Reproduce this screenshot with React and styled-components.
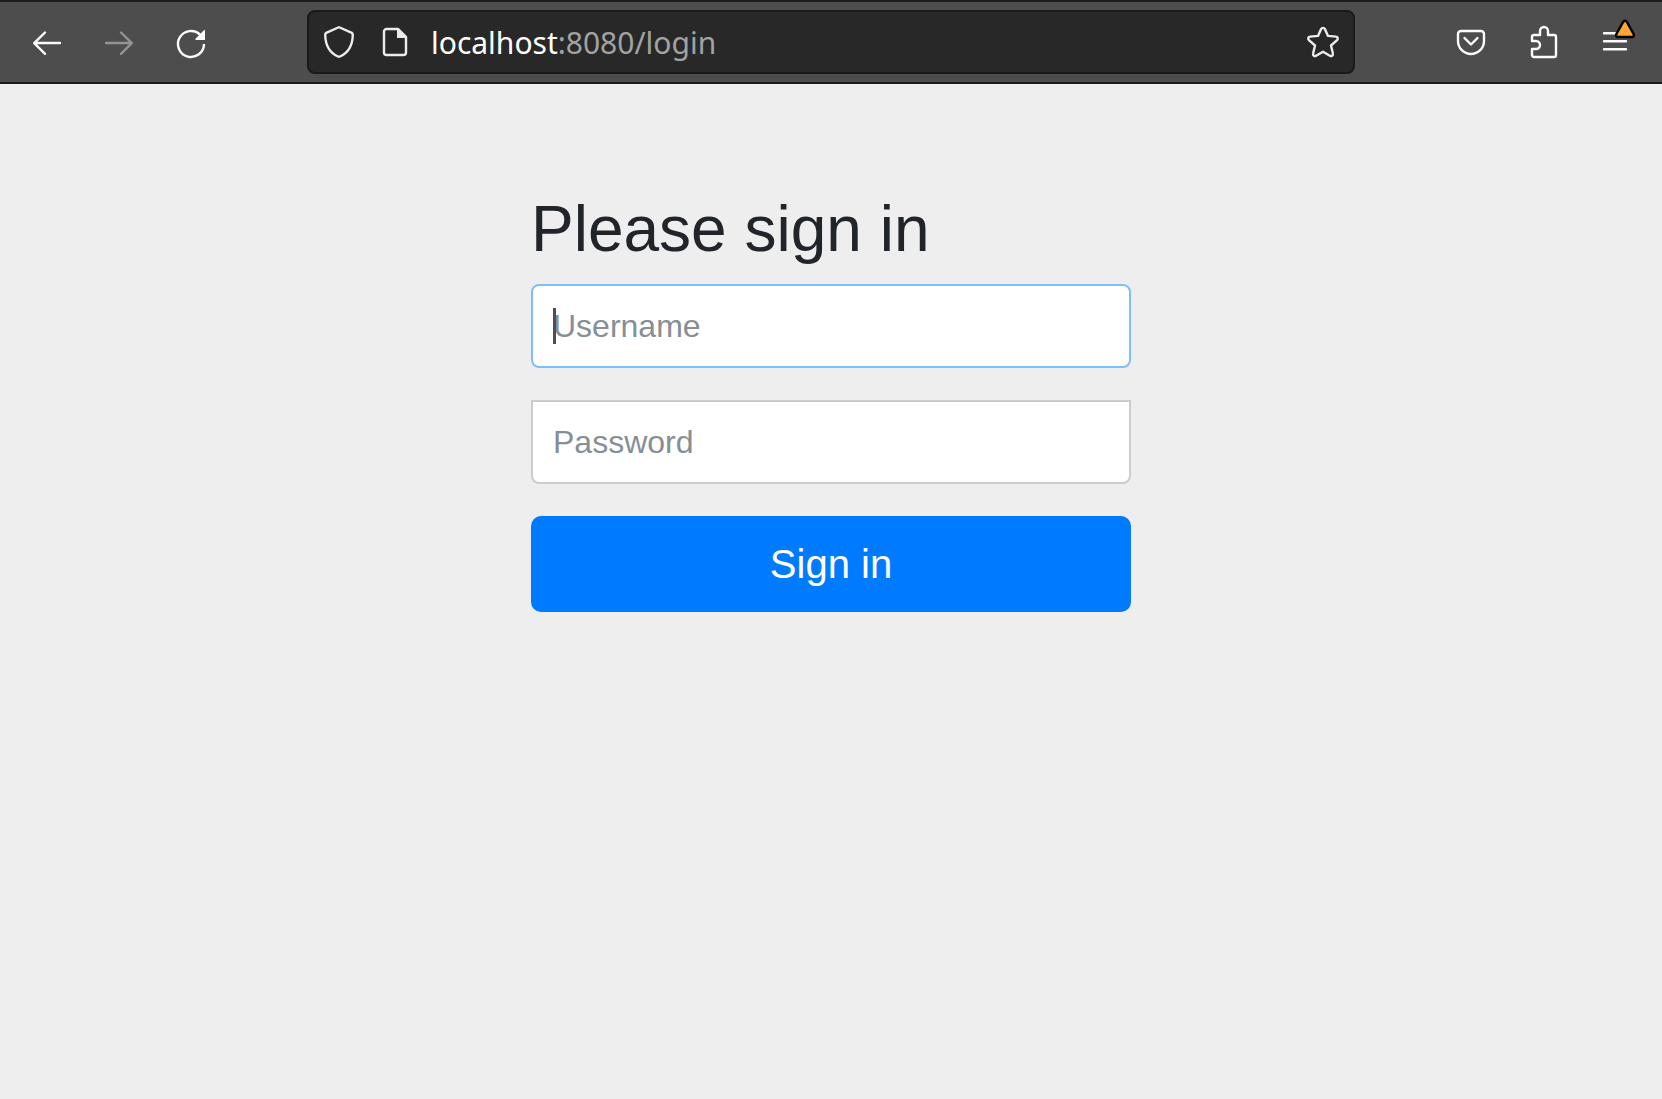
import React from "react";
import styled, { createGlobalStyle } from "styled-components";

const GlobalStyle = createGlobalStyle`
  *, *::before, *::after { box-sizing: border-box; }
  body {
    margin: 0;
    background: #eeeeee;
    color: #212529;
    font-family: "Liberation Sans", Arial, sans-serif;
  }
  button, input { font: inherit; }
`;

const Toolbar = styled.header`
  display: flex;
  align-items: center;
  gap: 84px;
  height: 84px;
  padding: 0 15px;
  background: #4d4d4d;
  border-top: 2px solid #1c1c1c;
  border-bottom: 2px solid #1a1a1a;
`;

const ToolGroup = styled.nav`
  display: flex;
  gap: 8px;
`;

const ToolButton = styled.button`
  display: flex;
  align-items: center;
  justify-content: center;
  width: 64px;
  height: 64px;
  padding: 0;
  border: 0;
  background: none;
  color: #fbfbfe;
  opacity: ${(p) => (p.disabled ? 0.4 : 1)};
`;

const UrlBar = styled.div`
  flex: 1;
  min-width: 0;
  display: flex;
  align-items: center;
  gap: 20px;
  height: 64px;
  padding: 0 14px;
  background: #282828;
  border: 2px solid #1a1a1a;
  border-radius: 8px;
  color: #ececec;
`;

const UrlIcons = styled.div`
  display: flex;
  gap: 24px;
`;

const UrlButton = styled.button`
  display: flex;
  padding: 0;
  border: 0;
  background: none;
  color: inherit;
`;

const Address = styled.div`
  flex: 1;
  min-width: 0;
  padding-top: 2px;
  overflow: hidden;
  white-space: nowrap;
  outline: 0;
  color: #a2a2a2;
  font-family: "Noto Sans", "Open Sans", sans-serif;
  font-size: 30px;
  line-height: 44px;
`;

const Host = styled.span`
  color: #ffffff;
`;

const Glyph = styled.svg`
  display: block;
  width: 32px;
  height: 32px;
  overflow: visible;
  fill: none;
  stroke: currentColor;
  stroke-width: 2.4;
  stroke-linecap: round;
  stroke-linejoin: round;
`;

const Page = styled.main`
  padding: 108px 30px 30px;
`;

const Form = styled.form`
  max-width: 600px;
  margin: 0 auto;
`;

const Title = styled.h2`
  margin: 0 0 18px;
  font-size: 64px;
  font-weight: 400;
  line-height: 74px;
`;

const Field = styled.label`
  display: block;
  position: relative;
  margin-bottom: 32px;
`;

const Caret = styled.span`
  position: absolute;
  top: 24px;
  left: 22px;
  width: 3px;
  height: 36px;
  background: #495057;
  pointer-events: none;
`;

const TextInput = styled.input`
  display: block;
  width: 100%;
  height: 84px;
  padding: 0 20px;
  background: #ffffff;
  border: 2px solid ${(p) => (p.$active ? "#80bdff" : "#cccccc")};
  border-radius: ${(p) => (p.$squareTop ? "0 0 8px 8px" : "8px")};
  color: #495057;
  font-size: 32px;
  outline: 0;

  &::placeholder { color: #868e96; opacity: 1; }
  &:focus { border-color: #80bdff; }
  &:focus + ${Caret}, &:not(:placeholder-shown) + ${Caret} { display: none; }
`;

const SubmitButton = styled.button`
  display: block;
  width: 100%;
  padding: 16px 32px;
  background: #007bff;
  border: 2px solid #007bff;
  border-radius: 10px;
  color: #ffffff;
  font-size: 40px;
  line-height: 60px;
`;

const Icon = ({ children }) => (
  <Glyph viewBox="0 0 32 32" aria-hidden="true">{children}</Glyph>
);

const BackIcon = () => (
  <Icon><path d="M29 17H3.4M14 6.5L3.2 17.2L14 27.8" /></Icon>
);

const ForwardIcon = () => (
  <Icon><path d="M3 17H28.6M18 6.5L28.8 17.2L18 27.8" /></Icon>
);

const ReloadIcon = () => (
  <Icon>
    <path strokeLinecap="butt" d="M29 18A13 13 0 1 1 25.2 8.8" />
    <path fill="currentColor" stroke="none" d="M30 4.4V14H21a.7.7 0 0 1-.5-1.2L28.9 4.3q1-.8 1.1.1Z" />
  </Icon>
);

const ShieldIcon = () => (
  <Icon>
    <path d="M15.2 1.5L3.2 6.9Q2.2 7.5 2.2 9C2.5 19 7 27 15 30.5Q16 31 17 30.5C25 27 29.5 19 29.8 9Q29.8 7.5 28.8 6.9L16.8 1.5Q16 1.1 15.2 1.5Z" />
  </Icon>
);

const PageIcon = () => (
  <Icon>
    <path d="M7.5 3H19L27 11V26.5a2.5 2.5 0 0 1-2.5 2.5H7.5A2.5 2.5 0 0 1 5 26.5V5.5A2.5 2.5 0 0 1 7.5 3Z" />
    <path fill="currentColor" stroke="none" d="M18 2.5V12H28V10.5L19.5 2Z" />
  </Icon>
);

const StarIcon = () => (
  <Icon>
    <path d="M14.1 3.1a2.1 2.1 0 0 1 3.8 0L21 9.9L28.9 10.6a2 2 0 0 1 1.2 3.5L24 19.5L25.9 27.6a2 2 0 0 1-3 2.2L16 25.7L9.1 29.8a2 2 0 0 1-3-2.2L8 19.5L1.9 14.1a2 2 0 0 1 1.2-3.5L11 9.9Z" />
  </Icon>
);

const PocketIcon = () => (
  <Icon>
    <path d="M6 5H26a3 3 0 0 1 3 3v7a13 13 0 0 1-26 0V8a3 3 0 0 1 3-3Z" />
    <path d="M9.5 12L16 18.5L22.5 12" />
  </Icon>
);

const ExtensionIcon = () => (
  <Icon>
    <path d="M13 9V5a4 4 0 0 1 8 0v4h6a2 2 0 0 1 2 2v18a2 2 0 0 1-2 2H7a2 2 0 0 1-2-2v-6h4a4 4 0 0 0 0-8H5v-4a2 2 0 0 1 2-2Z" />
  </Icon>
);

const MenuIcon = () => (
  <Icon>
    <path d="M5 7.3H27M5 15.3H27M5 23.3H27" />
    <path fill="#ffa436" stroke="#000000" d="M24.3-4.3Q26-6.200 27.7-4.3L34.700 8.200Q35.4 11 33 11H19Q16.6 11 17.3 8.200Z" />
  </Icon>
);

export default function App() {
  return (
    <>
      <GlobalStyle />
      <Toolbar>
        <ToolGroup aria-label="Navigation">
          <ToolButton type="button" aria-label="Back"><BackIcon /></ToolButton>
          <ToolButton type="button" aria-label="Forward" disabled><ForwardIcon /></ToolButton>
          <ToolButton type="button" aria-label="Reload"><ReloadIcon /></ToolButton>
        </ToolGroup>
        <UrlBar>
          <UrlIcons>
            <UrlButton type="button" aria-label="Tracking protection"><ShieldIcon /></UrlButton>
            <UrlButton type="button" aria-label="Site information"><PageIcon /></UrlButton>
          </UrlIcons>
          <Address role="textbox" aria-label="Address" tabIndex={0} contentEditable suppressContentEditableWarning spellCheck={false}>
            <Host>localhost</Host>:8080/login
          </Address>
          <UrlButton type="button" aria-label="Bookmark this page"><StarIcon /></UrlButton>
        </UrlBar>
        <ToolGroup aria-label="Tools">
          <ToolButton type="button" aria-label="Save to Pocket"><PocketIcon /></ToolButton>
          <ToolButton type="button" aria-label="Extensions"><ExtensionIcon /></ToolButton>
          <ToolButton type="button" aria-label="Application menu"><MenuIcon /></ToolButton>
        </ToolGroup>
      </Toolbar>
      <Page>
        <Form onSubmit={(event) => event.preventDefault()}>
          <Title>Please sign in</Title>
          <Field htmlFor="username">
            <TextInput id="username" name="username" type="text" placeholder="Username" aria-label="Username" $active />
            <Caret />
          </Field>
          <Field htmlFor="password">
            <TextInput id="password" name="password" type="password" placeholder="Password" aria-label="Password" $squareTop />
          </Field>
          <SubmitButton type="submit">Sign in</SubmitButton>
        </Form>
      </Page>
    </>
  );
}
